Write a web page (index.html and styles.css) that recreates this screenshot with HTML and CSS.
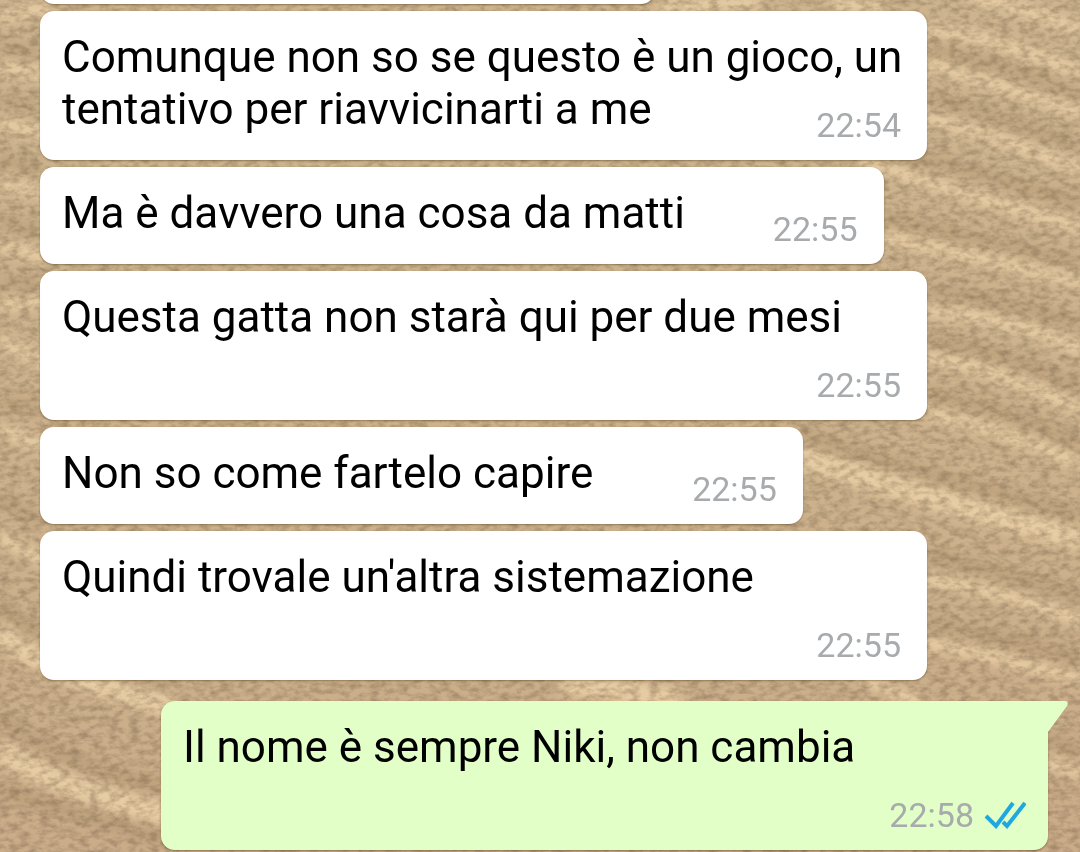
FILE: index.html
```html
<!DOCTYPE html>
<html lang="it">
<head>
  <meta charset="UTF-8">
  <meta name="viewport" content="width=device-width, initial-scale=1.0">
  <title>Chat</title>
  <link rel="stylesheet" href="styles.css">
</head>
<body>
  <!-- Sand wallpaper -->
  <svg class="wallpaper" viewBox="0 0 1080 852" preserveAspectRatio="none" aria-hidden="true">
    <defs>
      <linearGradient id="sand" x1="0" y1="0" x2="0" y2="1">
        <stop offset="0" stop-color="#cdb48f"/>
        <stop offset="0.6" stop-color="#ccb18c"/>
        <stop offset="1" stop-color="#caac89"/>
      </linearGradient>
      <filter id="soft" x="-10%" y="-10%" width="120%" height="120%">
        <feGaussianBlur stdDeviation="4"/>
      </filter>
      <filter id="grain" x="0" y="0" width="100%" height="100%" color-interpolation-filters="sRGB">
        <feTurbulence type="fractalNoise" baseFrequency="0.1 0.18" numOctaves="4" seed="9"/>
        <feColorMatrix type="matrix" values="0 0 0 0 0.35  0 0 0 0 0.27  0 0 0 0 0.18  0.7 0 0 0 -0.26"/>
      </filter>
    </defs>
    <rect width="1080" height="852" fill="url(#sand)"/>
    <g class="shade" filter="url(#soft)">
      <path d="M926 50Q1000 62 1080 95M926 95Q1000 117 1080 146M883 148Q990 175 1080 204M883 218Q990 243 1080 262M926 290Q1010 300 1080 325M926 340Q1010 352 1080 388M926 392Q1010 410 1080 444M802 435Q930 477 1080 515M926 555Q1010 572 1080 598M926 622Q1010 640 1080 658M1048 738L1080 750"/>
      <path d="M0 48L40 52M0 100L40 108M0 158L40 168M0 222L40 232M0 282L40 284M0 400L40 410M0 500L40 520M0 606Q80 672 160 686M0 716Q70 770 160 785M0 790Q80 815 160 840"/>
    </g>
    <g class="ridge" filter="url(#soft)">
      <path d="M970 -3Q1020 6 1080 30M926 28Q993 36 1080 73M926 63Q997 84 1080 113M926 118Q993 134 1080 170M860 160Q940 188 1080 227M860 232Q990 258 1080 282M926 310Q1013 318 1080 350M926 357Q1000 368 1080 410M926 413Q1013 432 1080 465M926 580Q1000 590 1080 620M926 643Q1013 660 1080 680M850 672L920 704M1048 762L1080 773"/>
      <path d="M0 16L50 8M0 67L50 75M0 123L50 135M0 182L50 195M0 246L50 258M0 305L50 302M0 340L50 366M0 430L50 450M0 537L50 564"/>
      <path d="M660 6L760 2M830 2L880 8"/>
    </g>
    <g class="ridge wide" filter="url(#soft)">
      <path d="M790 454Q900 490 1080 540M0 630Q33 670 170 706M0 750Q50 786 170 815M560 682L680 700"/>
    </g>
    <rect width="1080" height="852" filter="url(#grain)"/>
  </svg>

  <main class="chat">
    <div class="message earlier"></div>

    <p class="message">Comunque non so se questo è un gioco, un tentativo per riavvicinarti a me<time class="meta">22:54</time></p>
    <p class="message">Ma è davvero una cosa da matti<time class="meta">22:55</time></p>
    <p class="message">Questa gatta non starà qui per due mesi<time class="meta">22:55</time></p>
    <p class="message">Non so come fartelo capire&nbsp;<time class="meta">22:55</time></p>
    <p class="message">Quindi trovale un'altra sistemazione<time class="meta">22:55</time></p>

    <div class="message sent">
      Il nome è sempre Niki, non cambia
      <span class="meta">
        <time>22:58</time>
        <svg class="ticks" viewBox="0 0 42 28" role="img" aria-label="Letto">
          <path d="M2 15L12 25L29 2M19 21L23 25L41 2"/>
        </svg>
      </span>
      <svg class="tail" viewBox="0 0 20 32" aria-hidden="true">
        <path d="M0 0H17Q21 0 19 5L0 31Z"/>
      </svg>
    </div>
  </main>
</body>
</html>
```

FILE: styles.css
```css
:root {
  --received: #ffffff;
  --sent: #e1ffc7;
  --text: #000000;
  --meta: #a8abad;
  --read: #1fa8e0;
}

* {
  margin: 0;
  padding: 0;
  box-sizing: border-box;
}

body {
  background: #c6ab84;
  color: var(--text);
  font-family: Roboto, "Noto Sans", sans-serif;
  font-size: 44px;
  line-height: 52px;
}

/* wallpaper */
.wallpaper {
  position: fixed;
  top: 0;
  left: 0;
  width: 100%;
  height: 100%;
  z-index: -1;
}

.shade {
  fill: none;
  stroke: #a88d68;
  stroke-width: 16;
  opacity: 0.35;
}

.ridge {
  fill: none;
  stroke: #ecd1a8;
  stroke-width: 12;
  opacity: 0.85;
}

.wide {
  stroke-width: 22;
}

/* messages, pinned to the newest one */
.chat {
  display: flex;
  flex-direction: column;
  align-items: flex-start;
  justify-content: flex-end;
  gap: 7px;
  height: 100vh;
  padding: 0 32px 2px 40px;
  overflow: hidden;
}

.message {
  display: flow-root;
  position: relative;
  flex-shrink: 0;
  max-width: 88%;
  padding: 20px 22px 13px;
  background: var(--received);
  border-radius: 14px;
  box-shadow: 0 1px 2px rgba(80, 55, 20, 0.45);
}

.earlier {
  width: 61%;
  height: 97px;
}

.sent {
  align-self: flex-end;
  margin-top: 14px;
  background: var(--sent);
  border-top-right-radius: 0;
}

.meta {
  float: right;
  display: flex;
  align-items: center;
  gap: 10px;
  height: 64px;
  margin-right: 4px;
  margin-left: 88px;
  padding-top: 22px;
  padding-bottom: 2px;
  color: var(--meta);
  font-size: 34px;
  line-height: 40px;
}

.sent .meta {
  margin-right: 0;
}

.ticks {
  width: 42px;
  height: 28px;
  fill: none;
  stroke: var(--read);
  stroke-width: 4;
}

.tail {
  position: absolute;
  top: 0;
  left: 100%;
  width: 20px;
  height: 32px;
  fill: var(--sent);
}
```
